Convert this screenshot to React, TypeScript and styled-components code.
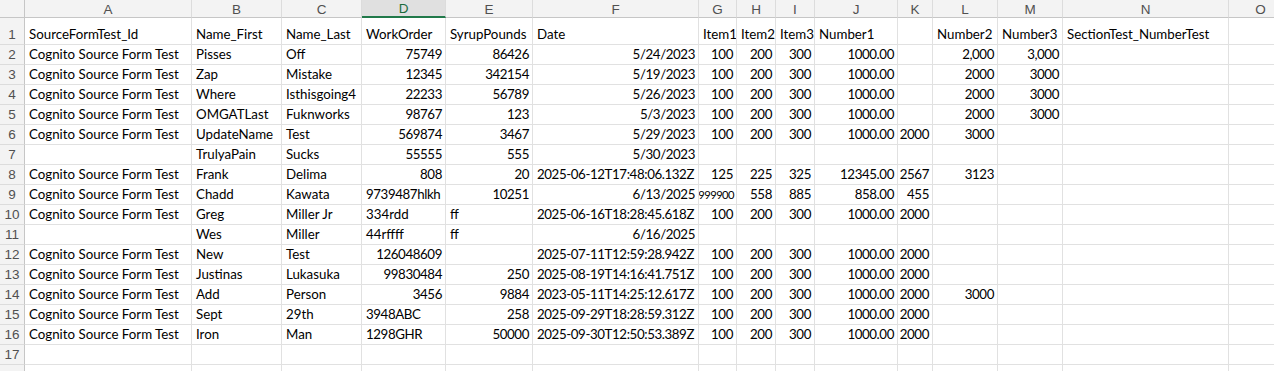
import React from "react";
import styled, { createGlobalStyle } from "styled-components";

const Global = createGlobalStyle`
  html, body { margin: 0; padding: 0; background: #ffffff; overflow: hidden; }
  body { font-family: Lato, "Liberation Sans", sans-serif; }
`;

const COLS = [25, 167, 90, 80, 84, 87, 166, 38, 39, 39, 83, 35, 65, 65, 166, 64];
const LETTERS = ["A", "B", "C", "D", "E", "F", "G", "H", "I", "J", "K", "L", "M", "N", "O"];

const Sheet = styled.div`
  display: grid;
  grid-template-columns: ${COLS.map((c) => `${c}px`).join(" ")};
  grid-template-rows: 18px 27px repeat(17, 20px);
  width: 1293px;
  height: 371px;
  overflow: hidden;
  background: #ffffff;
`;

const Corner = styled.div`
  background: #f3f3f3;
  border-right: 1px solid #c6c6c6;
  border-bottom: 1px solid #c6c6c6;
`;

const ColHead = styled.div<{ $selected?: boolean }>`
  display: flex;
  align-items: center;
  justify-content: center;
  font-family: "Liberation Sans", Arial, sans-serif;
  font-size: 13.5px;
  color: ${(p) => (p.$selected ? "#1a6b3c" : "#505050")};
  background: ${(p) => (p.$selected ? "#e0e0e0" : "#f3f3f3")};
  border-right: 1px solid #dcdcdc;
  border-bottom: ${(p) => (p.$selected ? "2px solid #21794a" : "1px solid #c6c6c6")};
  box-sizing: border-box;
  padding-top: 1px;
`;

const RowHead = styled.div`
  display: flex;
  align-items: flex-end;
  justify-content: center;
  padding-bottom: 1px;
  font-family: "Liberation Sans", Arial, sans-serif;
  font-size: 13.5px;
  line-height: 17px;
  color: #505050;
  background: #f3f3f3;
  border-right: 1px solid #c6c6c6;
  border-bottom: 1px solid #dcdcdc;
  box-sizing: border-box;
`;

const Cell = styled.div<{ $right?: boolean; $tight?: boolean; $fit?: boolean }>`
  display: flex;
  align-items: flex-end;
  justify-content: ${(p) => (p.$right ? "flex-end" : "flex-start")};
  padding: ${(p) => (p.$fit ? "0 2px 1px 1px" : "0 3px 1px 4px")};
  font-size: ${(p) => (p.$fit ? "11.2px" : "13.3px")};
  letter-spacing: ${(p) => (p.$fit ? "-0.55px" : p.$tight ? "-0.4px" : "0")};
  line-height: 17px;
  color: #000000;
  white-space: nowrap;
  overflow: hidden;
  border-right: 1px solid #e1e1e1;
  border-bottom: 1px solid #e1e1e1;
  box-sizing: border-box;
`;

const C = "Cognito Source Form Test";
const I = ["100", "200", "300", "1000.00"];

type V = string | { r: string; fit?: boolean };
const r = (s: string): V => ({ r: s });

const ROWS: V[][] = [
  ["SourceFormTest_Id", "Name_First", "Name_Last", "WorkOrder", "SyrupPounds", "Date", "Item1", "Item2", "Item3", "Number1", "", "Number2", "Number3", "SectionTest_NumberTest", ""],
  [C, "Pisses", "Off", r("75749"), r("86426"), r("5/24/2023"), ...I.map(r), "", r("2,000"), r("3,000"), "", ""],
  [C, "Zap", "Mistake", r("12345"), r("342154"), r("5/19/2023"), ...I.map(r), "", r("2000"), r("3000"), "", ""],
  [C, "Where", "Isthisgoing4", r("22233"), r("56789"), r("5/26/2023"), ...I.map(r), "", r("2000"), r("3000"), "", ""],
  [C, "OMGATLast", "Fuknworks", r("98767"), r("123"), r("5/3/2023"), ...I.map(r), "", r("2000"), r("3000"), "", ""],
  [C, "UpdateName", "Test", r("569874"), r("3467"), r("5/29/2023"), ...I.map(r), r("2000"), r("3000"), "", "", ""],
  ["", "TrulyaPain", "Sucks", r("55555"), r("555"), r("5/30/2023"), "", "", "", "", "", "", "", "", ""],
  [C, "Frank", "Delima", r("808"), r("20"), "2025-06-12T17:48:06.132Z", r("125"), r("225"), r("325"), r("12345.00"), r("2567"), r("3123"), "", "", ""],
  [C, "Chadd", "Kawata", "9739487hlkh", r("10251"), r("6/13/2025"), { r: "999900", fit: true }, r("558"), r("885"), r("858.00"), r("455"), "", "", "", ""],
  [C, "Greg", "Miller Jr", "334rdd", "ff", "2025-06-16T18:28:45.618Z", ...I.map(r), r("2000"), "", "", "", ""],
  ["", "Wes", "Miller", "44rffff", "ff", r("6/16/2025"), "", "", "", "", "", "", "", "", ""],
  [C, "New", "Test", r("126048609"), "", "2025-07-11T12:59:28.942Z", ...I.map(r), r("2000"), "", "", "", ""],
  [C, "Justinas", "Lukasuka", r("99830484"), r("250"), "2025-08-19T14:16:41.751Z", ...I.map(r), r("2000"), "", "", "", ""],
  [C, "Add", "Person", r("3456"), r("9884"), "2023-05-11T14:25:12.617Z", ...I.map(r), r("2000"), r("3000"), "", "", ""],
  [C, "Sept", "29th", "3948ABC", r("258"), "2025-09-29T18:28:59.312Z", ...I.map(r), r("2000"), "", "", "", ""],
  [C, "Iron", "Man", "1298GHR", r("50000"), "2025-09-30T12:50:53.389Z", ...I.map(r), r("2000"), "", "", "", ""],
  Array(15).fill(""),
  Array(15).fill(""),
];

const digitHeavy = (s: string) => s.length > 0 && s.replace(/[^0-9]/g, "").length / s.length > 0.5;

export default function App() {
  return (
    <>
      <Global />
      <Sheet>
        <Corner />
        {LETTERS.map((l) => (
          <ColHead key={l} $selected={l === "D"}>
            {l}
          </ColHead>
        ))}
        {ROWS.map((row, ri) => (
          <React.Fragment key={ri}>
            <RowHead>{ri < 17 ? ri + 1 : ""}</RowHead>
            {row.map((v, ci) =>
              typeof v === "string" ? (
                <Cell key={ci} $tight={digitHeavy(v)}>
                  {v}
                </Cell>
              ) : (
                <Cell key={ci} $right $tight={digitHeavy(v.r)} $fit={v.fit}>
                  {v.r}
                </Cell>
              )
            )}
          </React.Fragment>
        ))}
      </Sheet>
    </>
  );
}
